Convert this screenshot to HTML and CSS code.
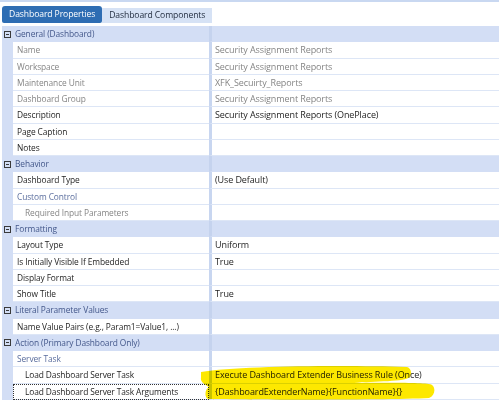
FILE: index.html
```html
<!DOCTYPE html>
<html>
<head>
<meta charset="utf-8">
<link rel="stylesheet" href="styles.css">
</head>
<body>
<div class="strip"></div>
<div class="tabs">
  <div class="tab active">Dashboard Properties</div>
  <div class="tab">Dashboard Components</div>
</div>
<div class="grid">
  <div class="row head"><span class="gut"><i class="tog"></i></span><span class="lab">General (Dashboard)</span><span class="val"></span></div>
  <div class="row ro"><span class="gut"></span><span class="lab">Name</span><span class="val">Security Assignment Reports</span></div>
  <div class="row ro"><span class="gut"></span><span class="lab">Workspace</span><span class="val">Security Assignment Reports</span></div>
  <div class="row ro"><span class="gut"></span><span class="lab">Maintenance Unit</span><span class="val">XFK_Secuirty_Reports</span></div>
  <div class="row ro"><span class="gut"></span><span class="lab">Dashboard Group</span><span class="val">Security Assignment Reports</span></div>
  <div class="row"><span class="gut"></span><span class="lab">Description</span><span class="val">Security Assignment Reports (OnePlace)</span></div>
  <div class="row"><span class="gut"></span><span class="lab">Page Caption</span><span class="val"></span></div>
  <div class="row"><span class="gut"></span><span class="lab">Notes</span><span class="val"></span></div>
  <div class="row head"><span class="gut"><i class="tog"></i></span><span class="lab">Behavior</span><span class="val"></span></div>
  <div class="row"><span class="gut"></span><span class="lab">Dashboard Type</span><span class="val">(Use Default)</span></div>
  <div class="row cat"><span class="gut"></span><span class="lab">Custom Control</span><span class="val"></span></div>
  <div class="row ro"><span class="gut"></span><span class="lab sub">Required Input Parameters</span><span class="val"></span></div>
  <div class="row head"><span class="gut"><i class="tog"></i></span><span class="lab">Formatting</span><span class="val"></span></div>
  <div class="row"><span class="gut"></span><span class="lab">Layout Type</span><span class="val">Uniform</span></div>
  <div class="row"><span class="gut"></span><span class="lab">Is Initially Visible If Embedded</span><span class="val">True</span></div>
  <div class="row"><span class="gut"></span><span class="lab">Display Format</span><span class="val"></span></div>
  <div class="row"><span class="gut"></span><span class="lab">Show Title</span><span class="val">True</span></div>
  <div class="row head"><span class="gut"><i class="tog"></i></span><span class="lab">Literal Parameter Values</span><span class="val"></span></div>
  <div class="row"><span class="gut"></span><span class="lab">Name Value Pairs (e.g., Param1=Value1, ...)</span><span class="val"></span></div>
  <div class="row head"><span class="gut"><i class="tog"></i></span><span class="lab">Action (Primary Dashboard Only)</span><span class="val"></span></div>
  <div class="row cat"><span class="gut"></span><span class="lab">Server Task</span><span class="val"></span></div>
  <div class="row"><span class="gut"></span><span class="lab sub">Load Dashboard Server Task</span><span class="val">Execute Dashboard Extender Business Rule (Once)</span></div>
  <div class="row"><span class="gut"></span><span class="lab sub focus">Load Dashboard Server Task Arguments</span><span class="val">{DashboardExtenderName}{FunctionName}{}</span></div>
  <svg class="marker" width="260" height="40" viewBox="0 0 260 40">
    <path d="M2 9 C40 3 140 2 208 4 C212 5 213 10 211 14 C207 19 175 18 155 20 C180 20 228 19 233 22 C237 25 236 33 230 35 C190 37 60 37 9 36 C5 34 6 26 10 24 C7 22 1 19 2 15 Z" fill="#fde800"/>
  </svg>
</div>
</body>
</html>
```
FILE: styles.css
```css
html, body {
  margin: 0;
  padding: 0;
  background: #ffffff;
}
body {
  font-family: "Open Sans", "Noto Sans", sans-serif;
  font-size: 8.6px;
  width: 499px;
  height: 400px;
  overflow: hidden;
}
.strip {
  height: 2px;
  background: #c9d8f1;
}
.tabs {
  display: flex;
  align-items: flex-end;
  padding: 5px 0 0 2px;
  height: 16px;
}
.tab {
  height: 15px;
  line-height: 15px;
  padding: 0 7px;
  background: #d6e2f5;
  color: #1f2a3c;
  letter-spacing: -0.1px;
}
.tab.active {
  height: 17px;
  line-height: 17px;
  background: #2e6db3;
  color: #ffffff;
  border-radius: 3px 3px 2px 2px;
}
.grid {
  position: relative;
  margin: 3px 0 0 2px;
  display: flex;
  flex-direction: column;
}
.row {
  display: grid;
  grid-template-columns: 11px 196px 1fr;
  height: 16.26px;
  color: #1e1e1e;
}
.gut {
  background: #d3def5;
  display: flex;
  align-items: center;
  justify-content: center;
}
.lab, .val {
  border-bottom: 1px solid #dde6f6;
  line-height: 16px;
  white-space: nowrap;
  overflow: hidden;
  padding-left: 4px;
  letter-spacing: -0.1px;
}
.lab {
  font-size: 8.4px;
}
.val {
  font-size: 9px;
  border-left: 3px solid #c8d6f0;
  padding-left: 3px;
}
.lab.sub {
  padding-left: 12px;
}
.ro {
  color: #858585;
}
.cat .lab {
  color: #5b6e9e;
}
.head .lab, .head .val {
  background: #d3def5;
  border-bottom-color: #d3def5;
  color: #43578a;
  padding-left: 2px;
}
.head .val {
  border-left-color: #c5d3ee;
}
.tog {
  display: block;
  width: 5px;
  height: 5px;
  border: 1px solid #3a3a3a;
  position: relative;
}
.tog::after {
  content: "";
  position: absolute;
  left: 1px;
  right: 1px;
  top: 2px;
  height: 1px;
  background: #3a3a3a;
}
.focus {
  outline: 1px dotted #333;
  outline-offset: -1px;
}
.marker {
  position: absolute;
  left: 197px;
  top: 337px;
  mix-blend-mode: multiply;
}
```
